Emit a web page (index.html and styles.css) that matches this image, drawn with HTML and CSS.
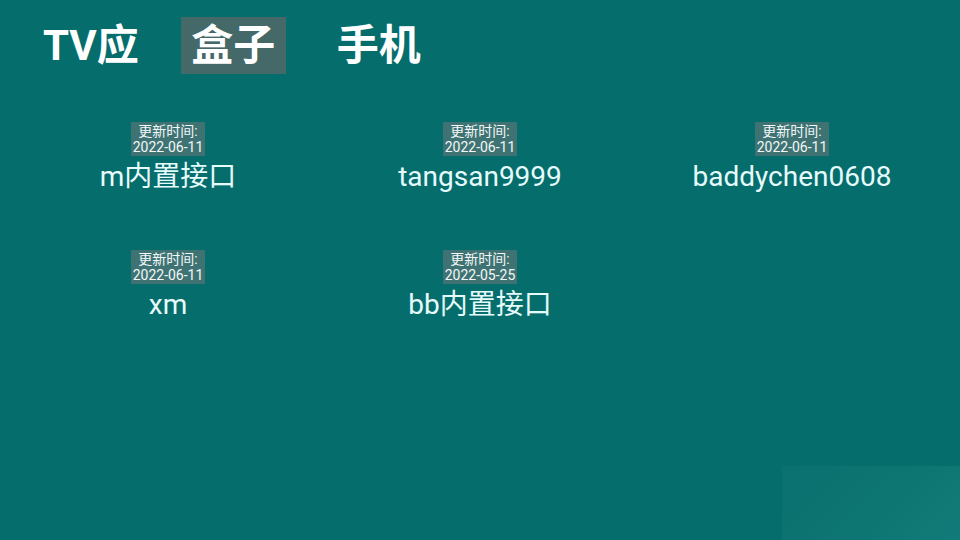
FILE: index.html
```html
<!DOCTYPE html>
<html lang="zh">
<head>
<meta charset="utf-8">
<link rel="stylesheet" href="styles.css">
</head>
<body>
<div class="screen">
  <nav class="tabs">
    <div class="tab tab-first">TV应</div>
    <div class="tab tab-active">盒子</div>
    <div class="tab">手机</div>
  </nav>
  <main class="grid">
    <div class="card">
      <div class="badge"><span>更新时间:</span><span>2022-06-11</span></div>
      <div class="title">m内置接口</div>
    </div>
    <div class="card">
      <div class="badge"><span>更新时间:</span><span>2022-06-11</span></div>
      <div class="title">tangsan9999</div>
    </div>
    <div class="card">
      <div class="badge"><span>更新时间:</span><span>2022-06-11</span></div>
      <div class="title">baddychen0608</div>
    </div>
    <div class="card">
      <div class="badge"><span>更新时间:</span><span>2022-06-11</span></div>
      <div class="title">xm</div>
    </div>
    <div class="card">
      <div class="badge"><span>更新时间:</span><span>2022-05-25</span></div>
      <div class="title">bb内置接口</div>
    </div>
  </main>
  <div class="corner"></div>
</div>
</body>
</html>
```
FILE: styles.css
```css
* { box-sizing: border-box; }
html, body {
  margin: 0;
  padding: 0;
  background: #066d6d;
}
body {
  width: 960px;
  height: 540px;
  overflow: hidden;
  font-family: Roboto, "Noto Sans CJK SC", sans-serif;
  color: #eafbfb;
}
.screen {
  position: relative;
  width: 960px;
  height: 540px;
}
.tabs {
  display: flex;
  align-items: stretch;
  padding-top: 17px;
  padding-left: 32px;
  height: 74px;
}
.tab {
  font-size: 42px;
  font-weight: bold;
  line-height: 57px;
  height: 57px;
  padding: 0 11px;
  color: #ffffff;
  white-space: nowrap;
}
.tab-first {
  margin-right: 31px;
}
.tab-active {
  background: #456868;
  padding: 0 10.5px;
  margin-right: 40px;
}
.grid {
  display: grid;
  grid-template-columns: repeat(3, 1fr);
  grid-auto-rows: 128px;
  padding: 48px 12px 0;
}
.card {
  display: flex;
  flex-direction: column;
  align-items: center;
}
.badge {
  display: flex;
  flex-direction: column;
  align-items: center;
  background: #3f7373;
  color: #f2f7f7;
  font-size: 14px;
  line-height: 16px;
  padding: 1px 1.5px;
}
.title {
  font-size: 28px;
  line-height: 34px;
  margin-top: 4px;
  color: #e6fbfb;
  white-space: nowrap;
}
.corner {
  position: absolute;
  left: 782px;
  top: 466px;
  width: 178px;
  height: 74px;
  background: linear-gradient(135deg, #0a7070 0%, #0e7672 60%, #127a78 100%);
}
```
